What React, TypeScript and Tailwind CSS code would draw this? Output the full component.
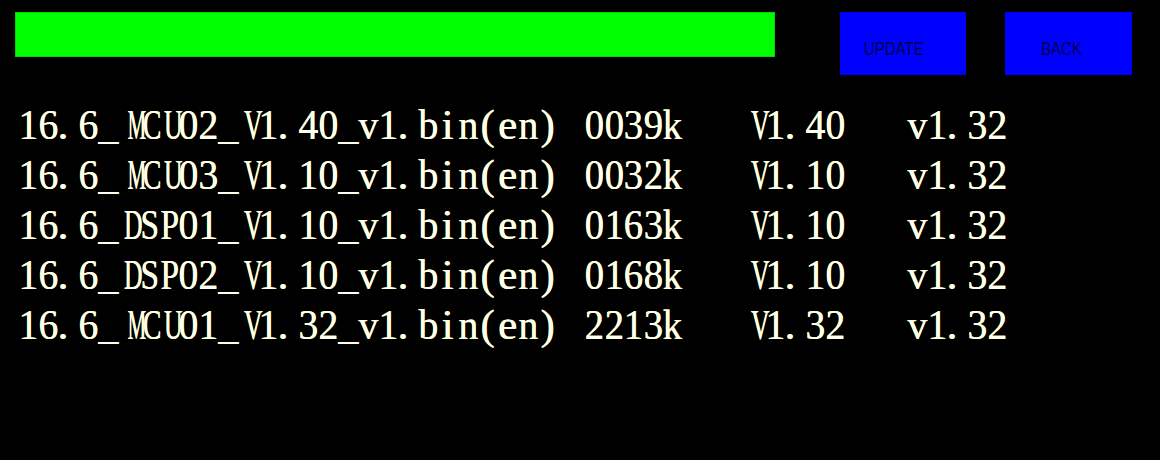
import React from "react";

// advance widths of Liberation Serif (em), used to squeeze each glyph into a half-width cell
const ADV: Record<string, number> = {
  "0": 0.5, "1": 0.5, "2": 0.5, "3": 0.5, "4": 0.5, "5": 0.5, "6": 0.5, "7": 0.5, "8": 0.5, "9": 0.5,
  ".": 0.25, _: 0.5, M: 0.889, C: 0.667, U: 0.722, V: 0.722, D: 0.722, S: 0.556, P: 0.556,
  v: 0.5, b: 0.5, i: 0.278, n: 0.5, "(": 0.333, ")": 0.333, e: 0.444, k: 0.5,
};
const FONT = 43;

const ROWS = [
  ["16.6_MCU02_V1.40_v1.bin(en)", "0039k", "V1.40", "v1.32"],
  ["16.6_MCU03_V1.10_v1.bin(en)", "0032k", "V1.10", "v1.32"],
  ["16.6_DSP01_V1.10_v1.bin(en)", "0163k", "V1.10", "v1.32"],
  ["16.6_DSP02_V1.10_v1.bin(en)", "0168k", "V1.10", "v1.32"],
  ["16.6_MCU01_V1.32_v1.bin(en)", "2213k", "V1.32", "v1.32"],
];

function Mono({ text, narrow }: { text: string; narrow?: boolean }) {
  return (
    <>
      {text.split("").map((ch, i) => {
        const caps = ch >= "A" && ch <= "Z";
        const target = caps ? 18.5 : narrow ? 19.3 : 19.8;
        const s = Math.min(1, target / ((ADV[ch] ?? 0.5) * FONT));
        return (
          <span
            key={i}
            className={`inline-block ${narrow ? "w-[19.5px]" : "w-[20px]"} ${ch === "." ? "text-left" : "text-center"}`}
          >
            <span className="inline-block" style={{ transform: `scaleX(${s})` }}>
              {ch}
            </span>
          </span>
        );
      })}
    </>
  );
}

export default function App() {
  return (
    <div className="w-[1160px] h-[460px] bg-black overflow-hidden">
      {/* Top bar */}
      <div className="flex items-start pt-[12px] pl-[15px]">
        <div className="w-[760px] h-[45px] bg-[#00ff00] border border-[#00d800]" />
        <button className="ml-[65px] w-[126px] h-[63px] bg-[#0000ff] flex items-center justify-center pt-[12px] pr-[18px] text-[18px] text-[#000048] font-['Liberation_Sans',sans-serif]">
          <span className="inline-block scale-x-[0.84]">UPDATE</span>
        </button>
        <button className="ml-[39px] w-[127px] h-[63px] bg-[#0000ff] flex items-center justify-center pt-[12px] pr-[14px] text-[18px] text-[#000048] font-['Liberation_Sans',sans-serif]">
          <span className="inline-block scale-x-[0.84]">BACK</span>
        </button>
      </div>

      {/* File list */}
      <div className="mt-[25px] pl-[18px] text-[43px] leading-[50px] text-[#fffff0] font-['Liberation_Serif',serif] [text-shadow:-0.7px_0_0_#ffff9a]">
        {ROWS.map((r, i) => (
          <div key={i} className="flex h-[50px] whitespace-nowrap">
            <div className="w-[566px]">
              <Mono text={r[0]} />
            </div>
            <div className="w-[161px]">
              <Mono text={r[1]} narrow />
            </div>
            <div className="w-[162px]">
              <Mono text={r[2]} />
            </div>
            <div>
              <Mono text={r[3]} />
            </div>
          </div>
        ))}
      </div>
    </div>
  );
}
